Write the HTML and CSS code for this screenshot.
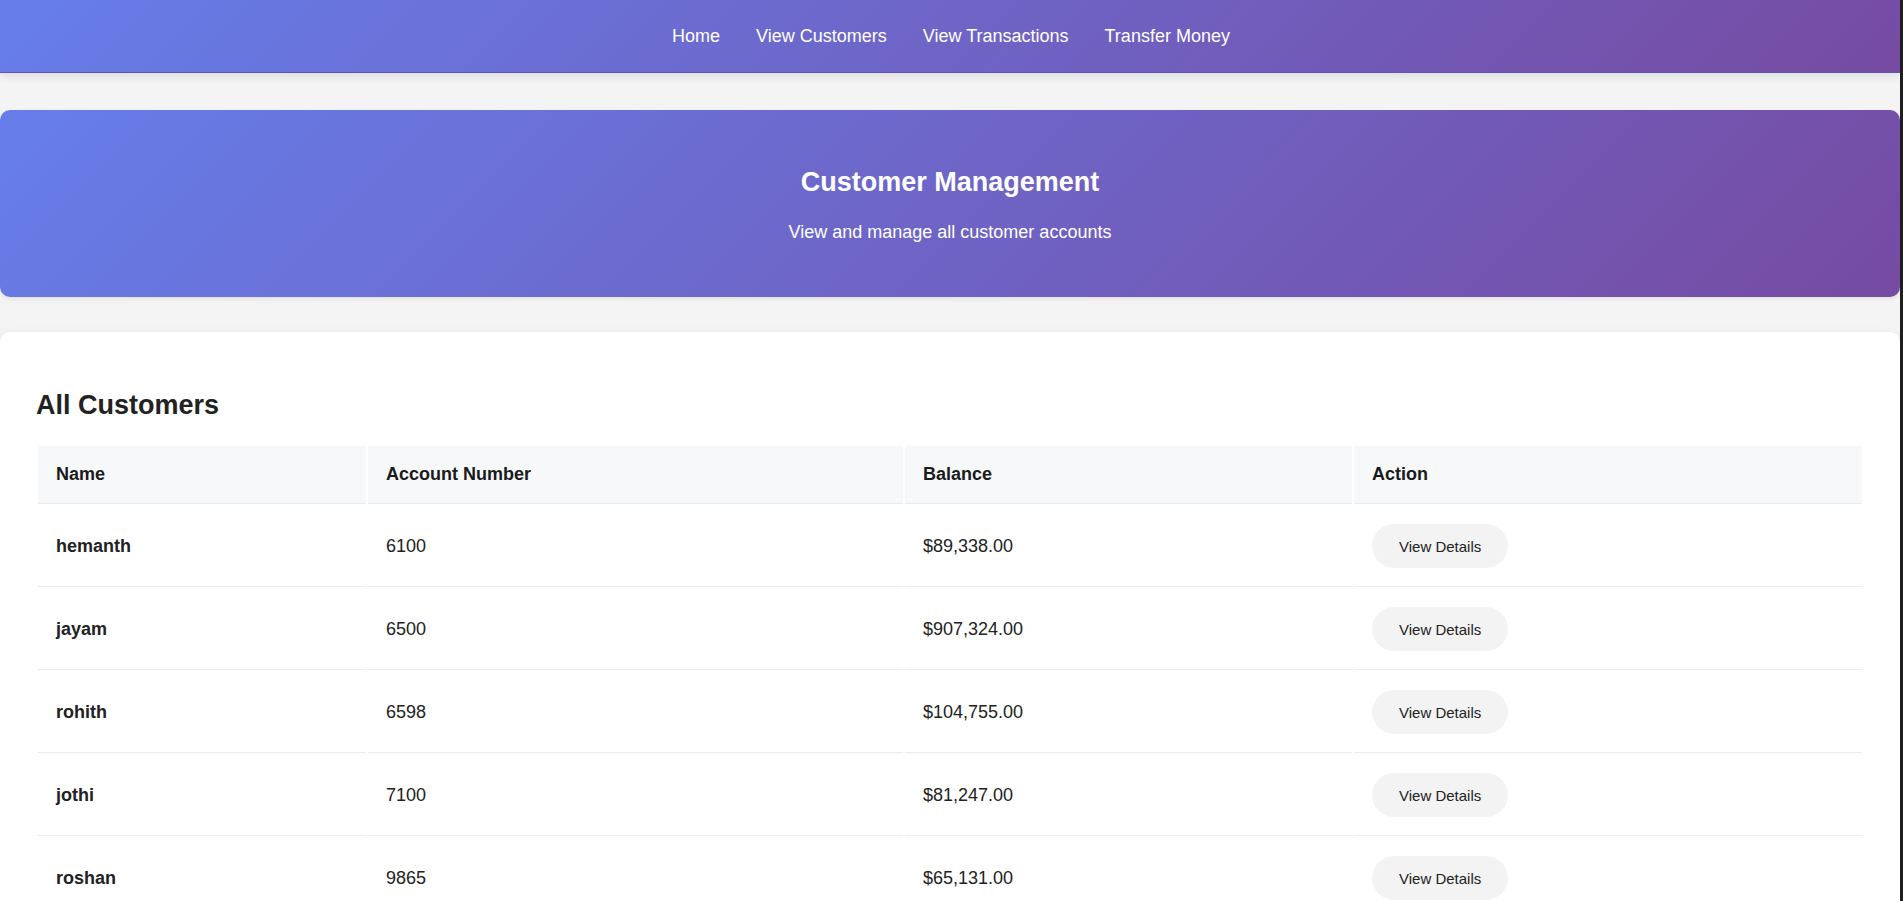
FILE: index.html
```html
<!DOCTYPE html>
<html lang="en">
<head>
<meta charset="utf-8">
<title>Customer Management</title>
<link rel="stylesheet" href="styles.css">
</head>
<body>
<nav class="topnav">
  <a href="#" class="nav-link">Home</a>
  <a href="#" class="nav-link">View Customers</a>
  <a href="#" class="nav-link">View Transactions</a>
  <a href="#" class="nav-link">Transfer Money</a>
</nav>
<main class="page">
  <section class="hero">
    <h1 class="hero-title">Customer Management</h1>
    <p class="hero-sub">View and manage all customer accounts</p>
  </section>
  <section class="card">
    <h2 class="card-title">All Customers</h2>
    <table class="customers">
      <colgroup>
        <col class="col-name">
        <col class="col-acct">
        <col class="col-bal">
        <col class="col-action">
      </colgroup>
      <thead>
        <tr><th>Name</th><th>Account Number</th><th>Balance</th><th>Action</th></tr>
      </thead>
      <tbody>
        <tr><td class="name">hemanth</td><td>6100</td><td>$89,338.00</td><td><button class="btn">View Details</button></td></tr>
        <tr><td class="name">jayam</td><td>6500</td><td>$907,324.00</td><td><button class="btn">View Details</button></td></tr>
        <tr><td class="name">rohith</td><td>6598</td><td>$104,755.00</td><td><button class="btn">View Details</button></td></tr>
        <tr><td class="name">jothi</td><td>7100</td><td>$81,247.00</td><td><button class="btn">View Details</button></td></tr>
        <tr><td class="name">roshan</td><td>9865</td><td>$65,131.00</td><td><button class="btn">View Details</button></td></tr>
      </tbody>
    </table>
  </section>
</main>
</body>
</html>
```
FILE: styles.css
```css
html {
  background: #1e1e1e;
}
body {
  margin: 0 3px 0 0;
  background: #f4f4f4;
  font-family: "Liberation Sans", Arial, sans-serif;
  color: #222;
  font-size: 18px;
  min-height: 901px;
}
.topnav {
  height: 73px;
  display: flex;
  align-items: center;
  justify-content: center;
  gap: 36px;
  padding-left: 2px;
  background: linear-gradient(135deg, #667eea 0%, #764ba2 100%);
  box-shadow: 0 2px 10px rgba(0, 0, 0, 0.12);
  border-bottom: 1px solid #5b54c4;
  box-sizing: border-box;
}
.nav-link {
  color: #fff;
  text-decoration: none;
  font-size: 18px;
}
.page {
  padding-top: 37px;
}
.hero {
  background: linear-gradient(135deg, #667eea 0%, #764ba2 100%);
  border-radius: 10px;
  color: #fff;
  text-align: center;
  padding: 57px 36px 54px;
  box-shadow: 0 2px 4px rgba(0, 0, 0, 0.08);
}
.hero-title {
  margin: 0 0 24px;
  font-size: 27px;
  font-weight: bold;
}
.hero-sub {
  margin: 0;
  font-size: 18px;
}
.card {
  margin-top: 35px;
  background: #fff;
  border-radius: 10px;
  padding: 36px;
  box-shadow: 0 2px 10px rgba(0, 0, 0, 0.08);
}
.card-title {
  font-size: 27px;
  margin: 22px 0 23px;
  color: #222;
}
.customers {
  width: 100%;
  table-layout: fixed;
  border-spacing: 2px;
}
.col-name { width: 328px; }
.col-acct { width: 535px; }
.col-bal { width: 447px; }
.col-action { width: 508px; }
.customers th {
  background: #f7f8fa;
  text-align: left;
  font-weight: bold;
  padding: 18px;
  border-bottom: 1px solid #e8eaee;
  color: #1a1a1a;
}
.customers td {
  padding: 18px;
  border-bottom: 1px solid #ececec;
  color: #222;
}
.customers td.name {
  font-weight: bold;
}
.btn {
  font-family: "Liberation Sans", Arial, sans-serif;
  font-size: 15px;
  line-height: 17px;
  padding: 13.5px 27px;
  border: none;
  border-radius: 22px;
  background: #f3f3f3;
  color: #222;
}
```
